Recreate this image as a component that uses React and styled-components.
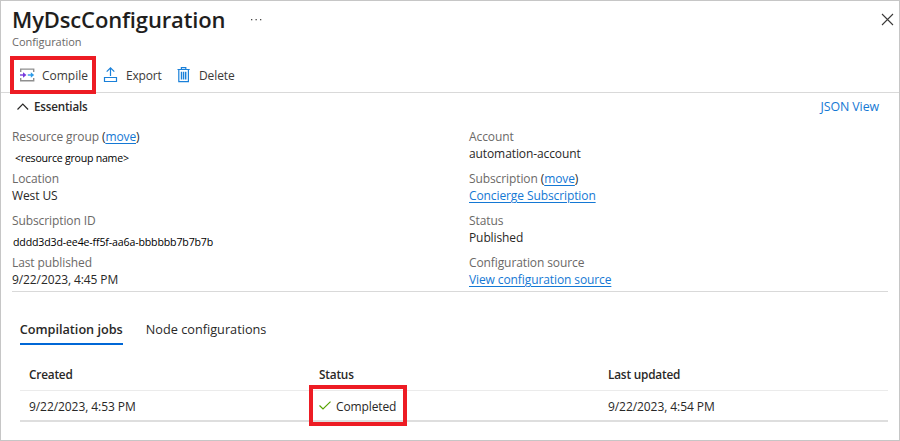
import React from "react";
import styled, { createGlobalStyle } from "styled-components";

const GlobalStyle = createGlobalStyle`
  *, *::before, *::after { box-sizing: border-box; }
  body { margin: 0; background: #fff; }
`;

const Blade = styled.main`
  width: 900px;
  height: 441px;
  display: flex;
  flex-direction: column;
  border: 1px solid #c6c6c6;
  background: #fff;
  color: #292827;
  font-family: "Open Sans", "Noto Sans", sans-serif;
  font-size: 12px;
  letter-spacing: -0.1px;
  line-height: 17px;
  white-space: nowrap;
  overflow: hidden;
`;

const Header = styled.header`
  display: flex;
  justify-content: space-between;
  height: 51px;
  padding: 3px 5px 0 11px;
`;

const TitleRow = styled.div`
  display: flex;
  align-items: center;
  gap: 25px;
  height: 30px;
`;

const Title = styled.h1`
  margin: 0;
  font-size: 22px;
  font-weight: 600;
  letter-spacing: -0.14px;
  line-height: 30px;
  color: #1f1e1d;
`;

const Subtitle = styled.div`
  font-size: 11px;
  letter-spacing: -0.05px;
  line-height: 15px;
  color: #6b6967;
`;

const CloseButton = styled.button`
  align-self: flex-start;
  display: flex;
  margin-top: 9px;
  padding: 0;
  border: 0;
  background: none;
`;

const Toolbar = styled.nav`
  display: flex;
  align-items: center;
  height: 41px;
  padding: 7px 0 0 18px;
  border-bottom: 1px solid #d9d9d9;
`;

const ToolButton = styled.button`
  position: relative;
  display: flex;
  align-items: center;
  gap: 7px;
  width: ${(p) => p.$width}px;
  padding: 0;
  border: 0;
  background: none;
  color: #3b3a39;
  font: inherit;
  letter-spacing: ${(p) => p.$tracking || "-0.1px"};

  svg {
    margin-bottom: 1px;
  }
`;

const Highlight = styled.span`
  position: absolute;
  top: ${(p) => p.$top}px;
  left: ${(p) => p.$left}px;
  width: ${(p) => p.$width}px;
  height: ${(p) => p.$height}px;
  border: 4px solid #ed1c24;
  pointer-events: none;
`;

const EssentialsBar = styled.div`
  display: flex;
  align-items: center;
  justify-content: space-between;
  height: 27px;
  padding: 0 20px 0 16px;
`;

const EssentialsToggle = styled.div`
  display: flex;
  align-items: center;
  gap: 5px;
  font-size: 11.6px;
  font-weight: 600;
  letter-spacing: -0.17px;
`;

const JsonLink = styled.a`
  color: #1478d4;
  font-size: 12.4px;
`;

const Properties = styled.section`
  display: grid;
  grid-template-columns: 457px 1fr;
  row-gap: 8px;
  align-content: start;
  height: 172px;
  margin: 0 11px;
  padding-top: 8px;
  border-bottom: 1px solid #d9d9d9;
`;

const Property = styled.div`
  height: 34px;
`;

const Label = styled.div`
  color: #6b6967;
`;

const Value = styled.div`
  color: #292827;
`;

const Placeholder = styled.div`
  padding: 5px 0 0 ${(p) => p.$indent}px;
  color: #000;
  font-size: 10.6px;
  letter-spacing: ${(p) => p.$tracking}px;
`;

const Paren = styled.span`
  color: #292827;
`;

const Link = styled.a`
  color: #1478d4;
  text-decoration: underline;
  text-decoration-thickness: 1px;
  text-underline-offset: 2px;
`;

const Tabs = styled.div`
  display: flex;
  gap: 23px;
  height: 53px;
  padding: 25px 0 0 18.7px;
  font-size: 12.7px;
`;

const Tab = styled.div`
  height: 28px;
  padding-top: 3px;
  line-height: 18px;
  font-weight: ${(p) => (p.$active ? 600 : 400)};
  letter-spacing: ${(p) => (p.$active ? "-0.01px" : "0.01px")};
  border-bottom: 2px solid ${(p) => (p.$active ? "#0067d6" : "transparent")};
`;

const Jobs = styled.section`
  margin: 10px 11px 0 19px;
`;

const JobRow = styled.div`
  display: grid;
  grid-template-columns: 290px 289px 1fr;
  align-items: center;
  height: ${(p) => (p.$head ? 36 : 31)}px;
  padding: ${(p) => (p.$head ? "4px 0 0 9px" : "1px 0 0 9px")};
  border-bottom: ${(p) => (p.$head ? "1px solid #ebebeb" : "2px solid #dedede")};
  font-weight: ${(p) => (p.$head ? 600 : 400)};
  font-size: ${(p) => (p.$head ? 11.8 : 12)}px;
  letter-spacing: ${(p) => (p.$head ? -0.2 : -0.07)}px;
`;

const StatusCell = styled.div`
  position: relative;
  display: flex;
  align-items: center;
  gap: 5px;
  letter-spacing: -0.12px;
`;

const CompileIcon = () => (
  <svg width="16" height="16" viewBox="0 0 16 16" fill="none">
    <path d="M1.7 4.9V2.1h13v2.8M1.7 11v2.8h13V11" stroke="#8f8f8f" strokeWidth="1.4" />
    <path d="M1 8h4" stroke="#773adc" strokeWidth="1.4" />
    <path d="M4 5.3 7.4 8 4 10.7z" fill="#773adc" />
    <path d="M8.8 8h4" stroke="#2e9be8" strokeWidth="1.4" />
    <path d="M11.8 5.3 15.2 8l-3.4 2.7z" fill="#2e9be8" />
  </svg>
);

const ExportIcon = () => (
  <svg width="16" height="16" viewBox="0 0 16 16" fill="none" stroke="#1a80d9" strokeWidth="1.2">
    <path d="M7.5 9V1M3.7 4.7l3.8-3.8 3.8 3.8M1.5 10.5h12v4h-12z" />
  </svg>
);

const DeleteIcon = () => (
  <svg width="16" height="16" viewBox="0 0 16 16" fill="none" stroke="#1a80d9" strokeWidth="1.2">
    <path d="M1.5 2.5h12.2M5.4 2.3V.7h4.4v1.6M2.8 2.6v12h9.6v-12" />
    <path d="M5.5 4.8v7.8M7.6 4.8v7.8M9.7 4.8v7.8" strokeWidth="1.4" />
  </svg>
);

const MoreIcon = () => (
  <svg width="14" height="4" viewBox="0 0 14 4" fill="#4a4948">
    <rect x="1" y="2" width="1.3" height="1.3" />
    <rect x="5.5" y="2" width="1.3" height="1.3" />
    <rect x="10" y="2" width="1.3" height="1.3" />
  </svg>
);

const CloseIcon = () => (
  <svg width="13" height="13" viewBox="0 0 13 13" fill="none" stroke="#3b3a39" strokeWidth="1.1">
    <path d="M1 1l11 11M12 1 1 12" />
  </svg>
);

const ChevronUp = () => (
  <svg width="12" height="8" viewBox="0 0 12 8" fill="none" stroke="#292827" strokeWidth="1.2">
    <path d="M.5 6.5 5.8 1.2l5.3 5.3" />
  </svg>
);

const CheckIcon = () => (
  <svg width="12" height="10" viewBox="0 0 12 10" fill="none" stroke="#57a300" strokeWidth="1.2">
    <path d="M.5 4.5 4 8 11.5.6" />
  </svg>
);

const Move = () => (
  <>
    <Paren>(</Paren>
    <Link>move</Link>
    <Paren>)</Paren>
  </>
);

export default function App() {
  return (
    <>
      <GlobalStyle />
      <Blade>
        <Header>
          <div>
            <TitleRow>
              <Title>MyDscConfiguration</Title>
              <MoreIcon />
            </TitleRow>
            <Subtitle>Configuration</Subtitle>
          </div>
          <CloseButton aria-label="Close">
            <CloseIcon />
          </CloseButton>
        </Header>

        <Toolbar>
          <ToolButton $width={84} $tracking="-0.02px">
            <CompileIcon />
            Compile
            <Highlight $top={-11} $left={-9} $width={86} $height={38} />
          </ToolButton>
          <ToolButton $width={73} $tracking="-0.2px">
            <ExportIcon />
            Export
          </ToolButton>
          <ToolButton $width={70}>
            <DeleteIcon />
            Delete
          </ToolButton>
        </Toolbar>

        <EssentialsBar>
          <EssentialsToggle>
            <ChevronUp />
            Essentials
          </EssentialsToggle>
          <JsonLink>JSON View</JsonLink>
        </EssentialsBar>

        <Properties>
          <Property>
            <Label>Resource group <Move /></Label>
            <Placeholder $indent={3} $tracking={-0.24}>&lt;resource group name&gt;</Placeholder>
          </Property>
          <Property>
            <Label>Account</Label>
            <Value>automation-account</Value>
          </Property>
          <Property>
            <Label>Location</Label>
            <Value>West US</Value>
          </Property>
          <Property>
            <Label>Subscription <Move /></Label>
            <Value><Link>Concierge Subscription</Link></Value>
          </Property>
          <Property>
            <Label>Subscription ID</Label>
            <Placeholder $indent={1} $tracking={-0.15}>dddd3d3d-ee4e-ff5f-aa6a-bbbbbb7b7b7b</Placeholder>
          </Property>
          <Property>
            <Label>Status</Label>
            <Value>Published</Value>
          </Property>
          <Property>
            <Label>Last published</Label>
            <Value>9/22/2023, 4:45 PM</Value>
          </Property>
          <Property>
            <Label>Configuration source</Label>
            <Value><Link>View configuration source</Link></Value>
          </Property>
        </Properties>

        <Tabs>
          <Tab $active>Compilation jobs</Tab>
          <Tab>Node configurations</Tab>
        </Tabs>

        <Jobs>
          <JobRow $head>
            <div>Created</div>
            <div>Status</div>
            <div>Last updated</div>
          </JobRow>
          <JobRow>
            <div>9/22/2023, 4:53 PM</div>
            <StatusCell>
              <CheckIcon />
              Completed
              <Highlight $top={-13} $left={-10} $width={98} $height={41} />
            </StatusCell>
            <div>9/22/2023, 4:54 PM</div>
          </JobRow>
        </Jobs>
      </Blade>
    </>
  );
}
